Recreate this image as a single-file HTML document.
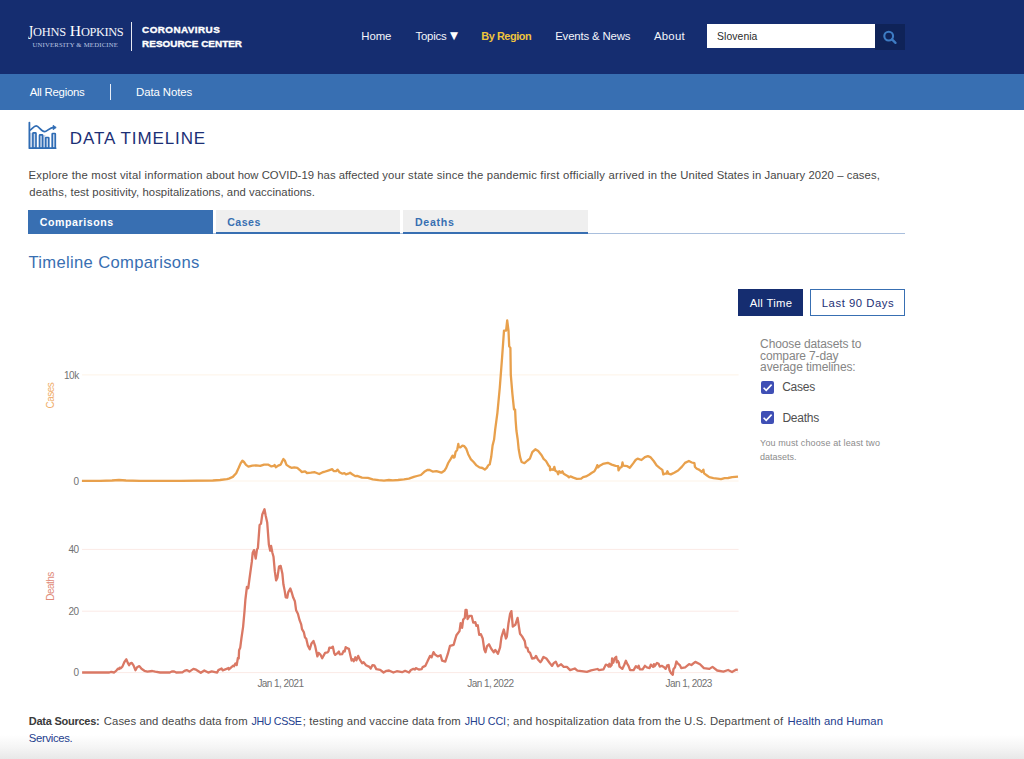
<!DOCTYPE html>
<html lang="en"><head><meta charset="utf-8"><title>Slovenia - COVID-19 Overview - Johns Hopkins</title>
<style>
*{box-sizing:border-box}
html,body{margin:0;padding:0}
body{width:1024px;height:759px;overflow:hidden;position:relative;background:#fff;font-family:"Liberation Sans", Arial, Helvetica, sans-serif;color:#474747}
.t{position:absolute;white-space:pre;line-height:1;margin:0;padding:0;text-decoration:none;display:block}
header{position:absolute;left:0;top:0;width:1024px;height:74px;background:#152d70}
.logo-div{position:absolute;left:130.8px;top:22px;width:1px;height:29px;background:#e6e9f2}
.search{position:absolute;left:707.2px;top:24.1px;width:167.6px;height:24.2px;background:#fff}
.search-btn{position:absolute;left:874.8px;top:23.8px;width:30.1px;height:26px;background:#0f2358}
.subnav{position:absolute;left:0;top:74px;width:1024px;height:36px;background:#386fb2}
.sub-div{position:absolute;left:109.7px;top:84px;width:1px;height:16px;background:#e8eef7}
.tabs{position:absolute;left:28px;top:210.3px;width:877px;height:23.4px;border-bottom:1px solid #a9bfdd}
.tabbox{position:absolute;top:0;height:23.4px;background:#efefef;border-bottom:2px solid #386fb2}
.tabbox.active{background:#386fb2}
.btnbox{position:absolute;top:289.3px;height:27px;border:1.3px solid #386fb2;background:#fff}
.btnbox.active{background:#152d70;border-color:#152d70}
.cb{position:absolute;left:760.6px;width:13.2px;height:13px;border-radius:2px;background:#3f4fb5}
.fade{position:absolute;left:0;top:735px;width:1024px;height:24px;background:linear-gradient(to bottom,#ffffff 0%,#f5f5f5 50%,#e8e8e8 100%)}
</style></head>
<body>
<header>
<span class="t logo-j" style='left:27.90px;top:23.20px;font-size:19.6px;font-weight:400;color:#fff;letter-spacing:0.000px;font-family:"Liberation Serif", "Times New Roman", serif;transform:scaleX(0.66);transform-origin:0 0;'>J</span>
<span class="t logo-sc" style='left:32.90px;top:26.40px;font-size:12.4px;font-weight:400;color:#f4f6fb;letter-spacing:-0.150px;font-family:"Liberation Serif", "Times New Roman", serif;'>OHNS</span>
<span class="t logo-j" style='left:69.80px;top:23.40px;font-size:15.6px;font-weight:400;color:#fff;letter-spacing:0.000px;font-family:"Liberation Serif", "Times New Roman", serif;'>H</span>
<span class="t logo-sc" style='left:80.90px;top:26.40px;font-size:12.4px;font-weight:400;color:#f4f6fb;letter-spacing:-0.393px;font-family:"Liberation Serif", "Times New Roman", serif;'>OPKINS</span>
<span class="t logo-sub" style='left:32.40px;top:41.50px;font-size:6.7px;font-weight:400;color:#bcc6e2;letter-spacing:0.220px;font-family:"Liberation Serif", "Times New Roman", serif;'>UNIVERSITY &amp; MEDICINE</span>
<div class="logo-div"></div>
<span class="t crc" style='left:142.10px;top:25.00px;font-size:9.9px;font-weight:700;color:#fff;letter-spacing:0.431px;-webkit-text-stroke:0.4px #fff;'>CORONAVIRUS</span>
<span class="t crc" style='left:142.10px;top:39.10px;font-size:9.9px;font-weight:700;color:#fff;letter-spacing:0.042px;-webkit-text-stroke:0.4px #fff;'>RESOURCE CENTER</span>
<nav>
<a class="t nav" href="#" style='left:361.30px;top:31.20px;font-size:11.4px;font-weight:400;color:#f3f5fa;letter-spacing:-0.097px;'>Home</a>
<a class="t nav" href="#" style='left:415.40px;top:31.20px;font-size:11.4px;font-weight:400;color:#f3f5fa;letter-spacing:-0.199px;'>Topics</a>
<a class="t nav" href="#" style='left:481.25px;top:31.20px;font-size:10.9px;font-weight:700;color:#f0c53c;letter-spacing:-0.439px;'>By Region</a>
<a class="t nav" href="#" style='left:555.20px;top:31.20px;font-size:11.4px;font-weight:400;color:#f3f5fa;letter-spacing:-0.170px;'>Events &amp; News</a>
<a class="t nav" href="#" style='left:654.00px;top:31.20px;font-size:11.4px;font-weight:400;color:#f3f5fa;letter-spacing:0.205px;'>About</a>
<span class="t" style='left:450.0px;top:30.4px;font-family:"DejaVu Sans",sans-serif;font-size:10.4px;color:#fff'>▼</span>
</nav>
<div class="search"></div>
<span class="t search-val" style='left:717.00px;top:31.70px;font-size:10.4px;font-weight:400;color:#2b2b2b;letter-spacing:0.077px;'>Slovenia</span>
<div class="search-btn"><svg width="30" height="26" viewBox="0 0 30 26" style="position:absolute;left:0;top:0"><circle cx="13.7" cy="12.1" r="4.4" fill="none" stroke="#3d7cc4" stroke-width="2.1"/><path d="M17.0 15.4 L20.5 18.9" stroke="#3d7cc4" stroke-width="2.3" stroke-linecap="round"/></svg></div>
</header>
<div class="subnav"></div>
<a class="t sub" href="#" style='left:29.70px;top:87.00px;font-size:11.4px;font-weight:400;color:#fff;letter-spacing:-0.253px;'>All Regions</a>
<a class="t sub" href="#" style='left:136.00px;top:87.00px;font-size:11.4px;font-weight:400;color:#fff;letter-spacing:-0.087px;'>Data Notes</a>
<div class="sub-div"></div>
<svg width="34" height="32" viewBox="0 0 34 32" style="position:absolute;left:26px;top:120px">
<g fill="#c9d8ec" stroke="none"><rect x="3.6" y="13" width="3" height="15"/><rect x="16.8" y="15" width="2.6" height="13"/></g>
<g fill="#c9d8ec" stroke="#2f6cb4" stroke-width="1.65" stroke-linejoin="round">
<rect x="6.9" y="12.8" width="3.1" height="15.4" rx="0.6"/>
<rect x="13.5" y="14.8" width="3.1" height="13.4" rx="0.6"/>
<rect x="19.7" y="17.5" width="3.1" height="10.7" rx="0.6"/>
<rect x="26.2" y="13.5" width="3.1" height="14.7" rx="0.6"/>
</g>
<path d="M3.4 2.6 V28.2 H29.6" fill="none" stroke="#2f6cb4" stroke-width="1.8" stroke-linecap="round" stroke-linejoin="round"/>
<path d="M4 10.2 C6.5 8.2 8.4 5.9 10.2 5.9 C12.6 5.9 15.6 11.6 18.5 11.6 C21 11.6 23.6 7.6 27.6 7.4" fill="none" stroke="#2f6cb4" stroke-width="1.7" stroke-linecap="round"/>
<path d="M27.2 5.4 L30.2 7.5 L27.2 9.6 Z" fill="#2f6cb4" stroke="#2f6cb4" stroke-width="1" stroke-linejoin="round"/>
</svg>
<h1 class="t h1" style='left:69.80px;top:129.80px;font-size:17.0px;font-weight:400;color:#1c2f75;letter-spacing:0.891px;'>DATA TIMELINE</h1>
<span class="t p" style='left:28.60px;top:169.60px;font-size:11.3px;font-weight:400;color:#474747;letter-spacing:0.207px;'>Explore the most vital information </span>
<span class="t p" style='left:206.00px;top:169.60px;font-size:11.3px;font-weight:400;color:#474747;letter-spacing:0.038px;'>about how COVID-19 has affected </span>
<span class="t p" style='left:382.20px;top:169.60px;font-size:11.3px;font-weight:400;color:#474747;letter-spacing:0.162px;'>your state since the pandemic </span>
<span class="t p" style='left:540.30px;top:169.60px;font-size:11.3px;font-weight:400;color:#474747;letter-spacing:0.222px;'>first officially arrived in the </span>
<span class="t p" style='left:680.30px;top:169.60px;font-size:11.3px;font-weight:400;color:#474747;letter-spacing:0.079px;'>United States in January 2020 – cases,</span>
<span class="t p" style='left:29.30px;top:186.80px;font-size:11.3px;font-weight:400;color:#474747;letter-spacing:0.116px;'>deaths, test positivity, </span>
<span class="t p" style='left:142.50px;top:186.80px;font-size:11.3px;font-weight:400;color:#474747;letter-spacing:0.047px;'>hospitalizations, and vaccinations.</span>
<div class="tabs"><div class="tabbox active" style="left:0;width:185.4px"></div><div class="tabbox" style="left:187.7px;width:184.3px"></div><div class="tabbox" style="left:374.6px;width:185.4px"></div></div>
<span class="t tab" style='left:39.70px;top:217.10px;font-size:10.6px;font-weight:700;color:#fff;letter-spacing:0.580px;'>Comparisons</span>
<span class="t tab" style='left:227.20px;top:217.10px;font-size:10.6px;font-weight:700;color:#386fb2;letter-spacing:0.470px;'>Cases</span>
<span class="t tab" style='left:415.00px;top:217.10px;font-size:10.6px;font-weight:700;color:#386fb2;letter-spacing:0.694px;'>Deaths</span>
<h2 class="t h2" style='left:28.40px;top:254.65px;font-size:16.6px;font-weight:400;color:#386fb2;letter-spacing:0.338px;'>Timeline Comparisons</h2>
<div class="btnbox active" style="left:738.4px;width:64.9px"></div><div class="btnbox" style="left:810.1px;width:94.9px"></div>
<span class="t btn" style='left:749.70px;top:297.70px;font-size:11.3px;font-weight:400;color:#fff;letter-spacing:0.302px;'>All Time</span>
<span class="t btn" style='left:821.80px;top:297.70px;font-size:11.3px;font-weight:400;color:#1c2f75;letter-spacing:0.542px;'>Last 90 Days</span>
<span class="t side" style='left:760.10px;top:337.60px;font-size:12.0px;font-weight:400;color:#858585;letter-spacing:-0.124px;'>Choose datasets to</span>
<span class="t side" style='left:760.10px;top:349.60px;font-size:12.0px;font-weight:400;color:#858585;letter-spacing:-0.137px;'>compare 7-day</span>
<span class="t side" style='left:760.10px;top:360.90px;font-size:12.0px;font-weight:400;color:#858585;letter-spacing:-0.105px;'>average timelines:</span>
<div class="cb" style="top:381.2px"><svg width="13" height="13" viewBox="0 0 13 13" style="position:absolute;left:0;top:0"><path d="M2.6 6.7 L5.2 9.3 L10.6 3.6" fill="none" stroke="#fff" stroke-width="1.6"/></svg></div><div class="cb" style="top:411.4px"><svg width="13" height="13" viewBox="0 0 13 13" style="position:absolute;left:0;top:0"><path d="M2.6 6.7 L5.2 9.3 L10.6 3.6" fill="none" stroke="#fff" stroke-width="1.6"/></svg></div>
<span class="t lbl" style='left:782.20px;top:381.30px;font-size:12.0px;font-weight:400;color:#505050;letter-spacing:-0.229px;'>Cases</span>
<span class="t lbl" style='left:782.40px;top:411.50px;font-size:12.0px;font-weight:400;color:#505050;letter-spacing:-0.246px;'>Deaths</span>
<span class="t note" style='left:760.10px;top:438.60px;font-size:9.0px;font-weight:400;color:#8c8c8c;letter-spacing:0.117px;'>You must choose at least two</span>
<span class="t note" style='left:760.10px;top:452.90px;font-size:9.0px;font-weight:400;color:#8c8c8c;letter-spacing:-0.016px;'>datasets.</span>
<svg width="1024" height="420" viewBox="0 300 1024 420" style="position:absolute;left:0;top:300px" font-family='"Liberation Sans", Arial, sans-serif'>
<line x1="82" x2="738.6" y1="374.9" y2="374.9" stroke="#fdf3e7" stroke-width="1"/>
<line x1="82" x2="738.6" y1="481.0" y2="481.0" stroke="#fdf3e7" stroke-width="1"/>
<line x1="82" x2="738.6" y1="549.4" y2="549.4" stroke="#fbeae6" stroke-width="1"/>
<line x1="82" x2="738.6" y1="611.2" y2="611.2" stroke="#fbeae6" stroke-width="1"/>
<line x1="82" x2="738.6" y1="672.6" y2="672.6" stroke="#fbeae6" stroke-width="1"/>
<path d="M81.9 480.8 L100.0 480.8 L112.0 480.5 L119.0 480.0 L126.0 480.5 L140.0 480.8 L180.0 480.8 L212.8 480.5 L220.0 480.0 L226.9 479.2 L228.9 478.6 L232.8 476.9 L236.2 473.2 L238.7 467.8 L240.6 463.4 L242.4 460.7 L244.0 462.0 L246.0 464.9 L248.4 466.6 L252.3 465.6 L256.2 465.4 L260.2 465.9 L264.1 464.6 L268.0 464.6 L271.4 466.4 L273.8 465.9 L274.6 464.9 L275.8 467.3 L278.2 465.6 L280.7 464.6 L282.1 461.5 L283.4 459.0 L284.8 460.5 L286.5 464.9 L289.5 466.9 L291.4 467.8 L294.3 467.3 L297.3 467.8 L300.2 470.3 L301.7 472.0 L305.1 471.4 L307.0 473.0 L310.9 472.7 L314.8 472.2 L319.2 474.0 L322.7 472.2 L323.9 472.0 L328.8 470.3 L332.2 469.1 L333.7 471.2 L336.1 471.1 L337.6 469.6 L339.5 472.2 L342.5 473.7 L344.4 473.2 L345.9 474.4 L348.3 473.7 L350.1 472.7 L352.2 474.2 L355.2 476.1 L357.1 475.9 L362.0 477.6 L367.9 477.9 L372.7 479.3 L378.6 480.2 L384.0 480.6 L388.9 480.0 L392.8 480.3 L398.1 480.0 L404.0 479.4 L408.9 478.6 L413.8 476.9 L417.0 476.0 L420.9 475.0 L424.3 471.8 L427.7 469.8 L429.6 470.0 L432.6 471.6 L436.5 471.1 L441.4 472.7 L444.3 470.8 L446.2 467.9 L448.2 463.0 L450.6 459.1 L452.6 455.6 L453.6 457.6 L454.6 457.1 L455.5 452.2 L457.2 449.8 L458.3 443.9 L458.9 447.1 L460.4 447.3 L462.4 445.6 L464.3 446.2 L466.3 448.8 L468.2 454.2 L470.7 459.1 L473.6 462.0 L476.5 465.4 L479.4 467.4 L482.4 468.0 L484.8 469.5 L486.8 467.9 L488.2 465.4 L489.7 464.4 L491.2 457.1 L492.6 445.4 L494.1 439.5 L495.2 429.4 L497.4 412.8 L499.8 387.5 L502.1 357.4 L504.0 330.6 L506.1 330.6 L507.2 320.3 L508.5 330.6 L509.2 346.4 L510.4 347.9 L510.8 374.8 L512.4 393.8 L514.0 409.3 L515.1 409.6 L515.6 420.0 L516.4 430.5 L517.7 439.5 L518.7 449.3 L520.1 457.1 L521.6 462.0 L524.5 463.2 L527.5 460.5 L529.9 458.6 L532.3 452.2 L535.3 449.3 L538.2 451.1 L541.6 455.2 L543.6 458.9 L546.0 461.0 L548.5 465.4 L549.9 466.9 L550.1 470.3 L551.9 469.3 L553.3 469.8 L554.3 466.9 L555.3 470.8 L557.2 471.8 L558.2 474.2 L559.2 471.3 L561.1 472.7 L562.4 471.3 L563.6 473.7 L567.5 475.9 L569.0 477.4 L570.4 476.4 L573.4 477.6 L576.8 478.8 L581.2 478.6 L583.1 477.1 L586.0 476.4 L589.0 474.7 L591.9 472.7 L594.4 471.3 L596.3 467.9 L597.3 465.1 L598.0 467.4 L600.2 465.4 L602.9 463.9 L607.8 462.8 L611.7 464.6 L615.6 465.9 L618.1 466.2 L618.5 470.3 L620.0 467.8 L621.7 466.9 L622.5 462.5 L623.2 465.6 L627.3 466.2 L629.8 467.8 L633.2 463.4 L635.6 460.0 L637.6 458.6 L641.5 460.0 L644.9 457.1 L647.9 456.1 L650.3 457.1 L653.7 461.0 L656.6 465.4 L659.6 467.8 L662.3 469.8 L663.3 474.4 L664.9 473.7 L666.4 473.7 L667.4 471.2 L668.4 473.7 L670.8 474.4 L674.2 472.7 L678.1 470.5 L682.0 466.6 L685.0 462.9 L688.9 461.0 L691.8 462.5 L694.4 463.2 L695.0 467.0 L697.0 468.8 L699.4 469.9 L701.7 472.0 L703.4 469.6 L704.1 473.4 L707.0 475.5 L709.3 477.2 L713.4 478.2 L717.5 478.6 L721.0 479.1 L724.6 478.1 L728.1 478.0 L732.2 477.2 L738.0 476.6" fill="none" stroke="#e8a04c" stroke-width="2.3" stroke-linejoin="round" stroke-linecap="butt"/>
<path d="M82.1 672.5 L109.3 672.5 L111.2 671.9 L114.2 672.5 L116.6 670.3 L118.1 668.6 L119.1 669.1 L119.8 667.6 L120.8 668.3 L122.5 666.4 L124.4 662.0 L126.4 659.3 L127.8 662.9 L129.1 665.2 L130.3 663.4 L131.8 662.9 L133.5 665.4 L135.5 670.3 L137.1 667.3 L139.4 666.1 L141.5 668.8 L144.4 670.8 L147.4 671.7 L152.3 671.0 L155.2 671.7 L160.1 672.5 L169.8 672.5 L171.8 671.5 L174.2 671.5 L176.2 672.5 L182.4 672.4 L184.4 670.9 L186.7 670.1 L189.4 671.6 L193.4 668.9 L196.1 669.7 L200.8 672.8 L204.3 670.5 L208.2 672.6 L211.7 671.4 L217.2 672.6 L218.4 670.1 L221.6 668.5 L222.7 670.3 L226.6 668.9 L228.5 668.0 L228.9 669.5 L231.2 667.3 L233.2 665.6 L234.0 666.2 L235.5 663.4 L236.7 665.0 L237.9 658.0 L238.7 658.4 L239.1 650.2 L240.2 647.8 L241.4 638.5 L243.1 626.8 L244.5 611.4 L245.4 599.5 L246.9 587.0 L248.2 588.3 L249.8 576.4 L251.8 561.9 L252.7 552.7 L254.0 550.1 L255.7 558.6 L257.0 549.4 L257.9 548.1 L259.6 525.0 L261.0 523.7 L262.3 514.5 L264.5 509.2 L265.6 515.2 L267.2 522.4 L268.9 544.8 L270.2 550.7 L271.1 545.9 L272.4 552.7 L273.5 556.7 L274.8 571.2 L276.1 580.4 L277.4 577.8 L279.0 566.6 L280.7 565.9 L282.4 573.8 L283.4 584.3 L284.7 590.9 L285.7 597.3 L287.2 597.7 L288.2 592.4 L290.3 588.5 L291.9 593.0 L293.2 597.6 L294.9 601.3 L296.1 610.2 L297.9 613.7 L299.6 620.2 L301.2 624.4 L302.0 629.1 L303.8 632.1 L305.0 637.5 L306.2 638.6 L307.9 645.8 L309.7 649.3 L311.5 643.4 L313.5 641.0 L315.1 645.8 L317.4 656.4 L318.6 652.9 L320.4 654.6 L322.2 658.2 L325.1 652.9 L327.5 652.3 L328.4 651.5 L329.4 647.6 L331.4 647.8 L332.8 646.6 L334.3 653.4 L335.2 654.9 L337.2 653.4 L338.9 651.5 L339.8 654.4 L342.1 654.2 L343.6 651.0 L344.7 651.5 L345.7 647.1 L347.0 648.1 L348.9 648.8 L350.4 655.4 L351.6 660.5 L352.8 659.3 L353.8 661.2 L355.3 657.3 L356.4 660.3 L358.2 655.9 L359.7 659.3 L362.1 663.2 L363.6 662.2 L366.0 665.2 L369.4 666.9 L370.7 668.6 L372.4 665.2 L374.3 665.4 L376.3 669.1 L380.2 669.8 L383.6 672.5 L386.5 670.8 L389.0 670.5 L393.4 672.5 L396.8 671.2 L402.1 672.2 L405.1 670.8 L409.0 672.5 L410.9 670.0 L413.4 668.9 L414.8 669.5 L415.8 668.1 L418.8 669.5 L421.7 669.1 L422.6 667.1 L425.3 665.9 L427.4 661.6 L430.0 655.9 L431.6 657.4 L433.5 652.2 L435.3 654.8 L437.9 656.4 L440.6 655.3 L442.1 660.6 L445.3 661.6 L447.9 653.7 L450.0 645.8 L453.7 644.8 L454.8 640.6 L456.4 635.3 L459.5 631.1 L460.6 623.2 L462.1 627.9 L463.2 619.5 L464.8 617.9 L465.5 610.0 L466.6 610.0 L467.6 619.0 L469.5 615.8 L471.6 615.8 L473.2 622.6 L475.3 622.1 L476.4 625.8 L477.8 625.3 L479.2 634.8 L480.9 634.2 L482.7 638.5 L484.3 649.5 L485.5 652.2 L486.9 646.4 L489.0 644.3 L491.1 648.5 L493.8 652.2 L495.3 650.0 L498.0 653.7 L500.1 647.4 L501.4 637.4 L503.8 629.5 L505.9 638.5 L506.9 636.4 L508.5 623.2 L510.1 613.7 L511.4 611.1 L512.8 626.6 L515.3 624.8 L517.6 617.9 L520.0 633.7 L522.1 636.4 L524.8 641.1 L525.8 647.4 L527.4 647.9 L528.4 651.6 L530.0 652.7 L532.1 658.5 L534.8 658.0 L536.0 655.9 L537.9 659.5 L540.4 662.2 L541.6 660.6 L543.5 656.9 L546.4 658.5 L549.5 662.7 L552.1 665.9 L553.7 663.2 L555.8 661.6 L557.9 666.4 L561.1 664.3 L563.7 666.9 L566.9 666.9 L570.1 670.1 L574.8 668.5 L577.4 670.6 L581.6 671.1 L586.9 671.9 L591.1 670.4 L597.5 669.0 L599.0 670.1 L603.5 669.3 L605.9 664.6 L607.4 665.0 L608.6 666.6 L609.4 663.8 L610.2 666.6 L611.7 665.0 L612.1 658.4 L613.3 662.7 L614.8 658.0 L616.2 656.8 L616.8 662.3 L617.6 660.7 L618.8 662.7 L619.5 666.6 L622.3 668.9 L624.2 665.0 L625.9 660.7 L627.0 663.4 L628.5 665.8 L630.1 670.1 L633.6 670.1 L635.9 666.2 L637.5 667.7 L638.7 665.8 L639.8 669.3 L642.6 669.3 L644.9 665.8 L646.9 667.3 L649.6 668.1 L650.8 664.6 L653.1 667.0 L653.9 664.2 L654.7 666.2 L657.0 663.0 L658.6 663.8 L659.8 666.6 L661.7 665.8 L664.1 667.3 L665.6 668.9 L667.2 665.4 L668.6 665.0 L669.5 670.1 L671.1 673.2 L672.8 674.8 L673.4 669.3 L675.0 667.3 L676.4 661.5 L677.7 663.4 L680.0 665.4 L681.2 668.1 L685.2 667.3 L689.1 664.2 L691.4 665.0 L695.3 661.9 L700.0 664.2 L703.9 668.1 L709.4 668.9 L712.5 666.9 L717.2 670.5 L723.4 671.6 L728.1 670.0 L732.0 672.0 L735.9 669.7 L737.8 670.0" fill="none" stroke="#da7864" stroke-width="2.3" stroke-linejoin="round" stroke-linecap="butt"/>
<text x="78.6" y="378.5" text-anchor="end" font-size="10" fill="#727272" letter-spacing="-0.55">10k</text>
<text x="78.6" y="485.0" text-anchor="end" font-size="10" fill="#727272" letter-spacing="-0.55">0</text>
<text x="78.6" y="553.0" text-anchor="end" font-size="10" fill="#727272" letter-spacing="-0.55">40</text>
<text x="78.6" y="614.7" text-anchor="end" font-size="10" fill="#727272" letter-spacing="-0.55">20</text>
<text x="78.6" y="676.2" text-anchor="end" font-size="10" fill="#727272" letter-spacing="-0.55">0</text>
<text x="280.5" y="686.8" text-anchor="middle" font-size="10" fill="#727272" letter-spacing="-0.55">Jan 1, 2021</text>
<text x="490.3" y="686.8" text-anchor="middle" font-size="10" fill="#727272" letter-spacing="-0.55">Jan 1, 2022</text>
<text x="688.7" y="686.8" text-anchor="middle" font-size="10" fill="#727272" letter-spacing="-0.55">Jan 1, 2023</text>
<text transform="translate(54,395.7) rotate(-90)" text-anchor="middle" font-size="10" fill="#efae6c" letter-spacing="-0.55">Cases</text>
<text transform="translate(54,586.5) rotate(-90)" text-anchor="middle" font-size="10" fill="#e08a78" letter-spacing="-0.55">Deaths</text>
</svg>
<div class="fade"></div>
<span class="t ds" style='left:28.80px;top:715.90px;font-size:11.0px;font-weight:700;color:#3a3a3a;letter-spacing:-0.257px;'>Data Sources:</span>
<span class="t ds" style='left:103.80px;top:715.90px;font-size:11.3px;font-weight:400;color:#474747;letter-spacing:0.075px;'>Cases and deaths data from</span>
<a class="t ds" href="#" style='left:251.50px;top:715.90px;font-size:10.7px;font-weight:400;color:#24408e;letter-spacing:-0.351px;'>JHU CSSE</a>
<span class="t ds" style='left:302.70px;top:715.90px;font-size:11.3px;font-weight:400;color:#474747;letter-spacing:0.141px;'>; testing and vaccine data from</span>
<a class="t ds" href="#" style='left:464.70px;top:715.90px;font-size:10.7px;font-weight:400;color:#24408e;letter-spacing:-0.143px;'>JHU CCI</a>
<span class="t ds" style='left:506.50px;top:715.90px;font-size:11.3px;font-weight:400;color:#474747;letter-spacing:0.136px;'>; and hospitalization data from the U.S. Department of</span>
<a class="t ds" href="#" style='left:787.50px;top:715.90px;font-size:11.3px;font-weight:400;color:#24408e;letter-spacing:0.086px;'>Health and Human</a>
<a class="t ds" href="#" style='left:28.80px;top:733.20px;font-size:11.3px;font-weight:400;color:#24408e;letter-spacing:-0.321px;'>Services.</a>
</body></html>
